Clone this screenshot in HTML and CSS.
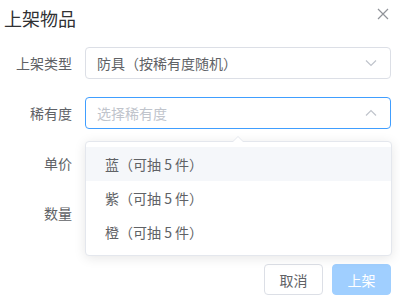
FILE: index.html
```html
<!DOCTYPE html>
<html lang="zh-CN">
<head>
<meta charset="utf-8">
<link rel="stylesheet" href="styles.css">
</head>
<body>
<div class="dialog">
  <div class="header">
    <span class="title">上架物品</span>
    <svg class="close" width="12" height="12" viewBox="0 0 12 12"><path d="M1 1L11 11M11 1L1 11" stroke="#909399" stroke-width="1.2" fill="none"/></svg>
  </div>
  <div class="form">
    <div class="row">
      <label class="label">上架类型</label>
      <div class="select">
        <span class="value">防具（按稀有度随机）</span>
        <svg class="chev" width="12" height="8" viewBox="0 0 12 8"><path d="M1 1.5L6 6.5L11 1.5" stroke="#c0c4cc" stroke-width="1.2" fill="none"/></svg>
      </div>
    </div>
    <div class="row">
      <label class="label">稀有度</label>
      <div class="select focus">
        <span class="placeholder">选择稀有度</span>
        <svg class="chev" width="12" height="8" viewBox="0 0 12 8"><path d="M1 6.5L6 1.5L11 6.5" stroke="#c0c4cc" stroke-width="1.2" fill="none"/></svg>
      </div>
    </div>
    <div class="row">
      <label class="label">单价</label>
      <div class="select"></div>
    </div>
    <div class="row">
      <label class="label">数量</label>
      <div class="select"></div>
    </div>
  </div>
  <div class="footer">
    <button class="btn">取消</button>
    <button class="btn primary">上架</button>
  </div>
  <div class="dropdown">
    <div class="arrow"></div>
    <ul class="list">
      <li class="item hover">蓝（可抽 5 件）</li>
      <li class="item">紫（可抽 5 件）</li>
      <li class="item">橙（可抽 5 件）</li>
    </ul>
  </div>
</div>
</body>
</html>
```
FILE: styles.css
```css
* { box-sizing: border-box; }
html, body { margin: 0; padding: 0; background: #fff; }
body {
  font-family: "Noto Sans CJK SC", "Noto Sans", sans-serif;
  color: #606266;
  width: 400px;
  height: 298px;
  overflow: hidden;
}
.dialog { position: relative; width: 400px; height: 298px; }
.header {
  display: flex;
  justify-content: space-between;
  align-items: flex-start;
  padding: 6px 11px 0 4px;
  height: 30px;
}
.title { font-size: 18px; line-height: 24px; color: #303133; }
.close { margin-top: 2px; }
.form { margin-top: 17px; }
.row { display: flex; align-items: center; height: 32px; margin-bottom: 18px; }
.label {
  width: 85px;
  padding-right: 13px;
  text-align: right;
  font-size: 14px;
  color: #606266;
}
.select {
  width: 306px;
  height: 32px;
  border: 1px solid #dcdfe6;
  border-radius: 4px;
  display: flex;
  align-items: center;
  justify-content: space-between;
  padding: 0 13px 0 11px;
  font-size: 14px;
}
.select.focus { border-color: #409eff; }
.value { color: #606266; }
.placeholder { color: #c0c4cc; }
.footer {
  display: flex;
  justify-content: flex-end;
  gap: 9px;
  padding-right: 9px;
  margin-top: 35px;
}
.btn {
  width: 59px;
  height: 31px;
  border: 1px solid #dcdfe6;
  border-radius: 4px;
  background: #fff;
  color: #606266;
  font-family: inherit;
  font-size: 14px;
  padding: 0;
}
.btn.primary { background: #a0cfff; border-color: #a0cfff; color: #fff; }
.dropdown {
  position: absolute;
  left: 85px;
  top: 141px;
  width: 307px;
  background: #fff;
  border: 1px solid #e4e7ed;
  border-radius: 4px;
  box-shadow: 0 2px 12px rgba(0, 0, 0, 0.1);
}
.arrow {
  position: absolute;
  top: -6px;
  left: 146px;
  width: 0;
  height: 0;
  border-left: 6px solid transparent;
  border-right: 6px solid transparent;
  border-bottom: 6px solid #e4e7ed;
}
.arrow::after {
  content: "";
  position: absolute;
  left: -5px;
  top: 1px;
  border-left: 5px solid transparent;
  border-right: 5px solid transparent;
  border-bottom: 5px solid #fff;
}
.list { list-style: none; margin: 0; padding: 5px 0 6px; }
.item {
  height: 34px;
  line-height: 34px;
  padding-left: 19px;
  font-size: 14px;
  color: #606266;
}
.item.hover { background: #f5f7fa; }
```
